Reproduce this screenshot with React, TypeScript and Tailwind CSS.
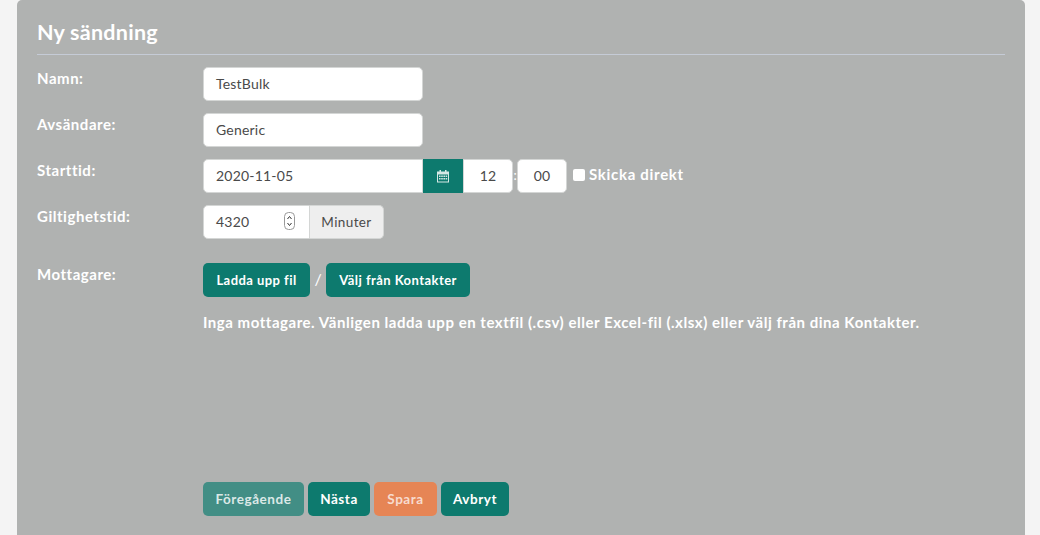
import React from "react";

const inputCls = "h-[34px] pb-[2px] bg-white border border-[#d4d6d5] text-[14px] text-[#4a4a4a] tracking-[0.2px] flex items-center";
const btn = "h-[34px] rounded-[5px] text-[13.5px] font-bold tracking-[0.55px] flex items-center justify-center";
const teal = " bg-[#0d7a6e] text-white";
const label = "text-[15px] font-bold text-white tracking-[0.53px] leading-[20px]";

function Row({ name, children, className = "h-[46px]" }: { name: string; children?: React.ReactNode; className?: string }) {
  return (
    <div className={"flex " + className}>
      <div className={"w-[166px] pt-[1px] " + label}>{name}</div>
      <div className="flex items-start">{children}</div>
    </div>
  );
}

export default function App() {
  return (
    <div className="w-[1040px] h-[535px] overflow-hidden bg-[#f4f4f4] pl-[17px] pr-[15px]" style={{ fontFamily: '"Lato", "Liberation Sans", sans-serif' }}>
      <div className="h-[535px] bg-[#b0b2b1] rounded-t-[5px] px-[20px] pt-[18px]">
        <div className="h-[37px] border-b border-[#c5cbd6] text-[21.5px] font-bold text-white leading-[28px] tracking-[0.25px]">Ny sändning</div>
        <div className="pt-[12px]">
          <Row name="Namn:"><div className={inputCls + " w-[220px] rounded-[5px] px-[12px]"}>TestBulk</div></Row>
          <Row name="Avsändare:"><div className={inputCls + " w-[220px] rounded-[5px] px-[12px]"}>Generic</div></Row>
          <Row name="Starttid:">
            <div className={inputCls + " w-[220px] rounded-l-[5px] px-[12px]"}>2020-11-05</div>
            <div className="w-[40px] h-[34px] bg-[#0d7a6e] flex items-center justify-center">
              <svg width="14" height="14" viewBox="0 0 14 14" fill="#d5e8e5"><path d="M1 2.5h12v11H1z M2 5.5v7h10V5.5z" fillRule="evenodd" /><path d="M3.5 1h1.5v2.5H3.5zM9 1h1.5v2.5H9zM3 6.5h1.6v1.5H3zM5.2 6.5h1.6v1.5H5.2zM7.4 6.5H9v1.5H7.4zM9.6 6.5h1.6v1.5H9.6zM3 9h1.6v1.5H3zM5.2 9h1.6v1.5H5.2zM7.4 9H9v1.5H7.4zM9.6 9h1.6v1.5H9.6z" /></svg>
            </div>
            <div className={inputCls + " w-[50px] rounded-r-[5px] justify-center"}>12</div>
            <div className="w-[4px] h-[34px] text-white text-[13px] flex items-center justify-center">:</div>
            <div className={inputCls + " w-[50px] rounded-[5px] justify-center"}>00</div>
            <div className="ml-[6px] h-[30px] flex items-center">
              <div className="w-[12px] h-[12px] mt-[1px] bg-white rounded-[2px]" />
              <span className="ml-[4px] text-[15px] font-bold text-white tracking-[0.7px] leading-[20px]">Skicka direkt</span>
            </div>
          </Row>
          <Row name="Giltighetstid:" className="h-[58px]">
            <div className={inputCls + " w-[107px] rounded-l-[5px] pl-[12px] justify-between pr-[14px]"}>
              <span>4320</span>
              <svg width="11" height="18" viewBox="0 0 11 18" fill="none"><rect x="0.5" y="0.5" width="10" height="17" rx="4" stroke="#999" /><path d="M3.5 7 5.5 4.5 7.5 7M3.5 11 5.5 13.5 7.5 11" stroke="#333" /></svg>
            </div>
            <div className="h-[34px] w-[74px] bg-[#eeeeee] border border-[#d4d6d5] border-l-0 rounded-r-[5px] text-[13.5px] text-[#4a4a4a] tracking-[0.4px] flex items-center justify-center">Minuter</div>
          </Row>
          <Row name="Mottagare:" className="h-[219px]">
            <div>
              <div className="flex items-center">
                <div className={"h-[34px] rounded-[5px] text-[13px] font-bold tracking-[0.45px] pt-[1px] flex items-center justify-center w-[107px]" + teal}>Ladda upp fil</div>
                <span className="w-[16px] pb-[3px] text-center text-white text-[16px]">/</span>
                <div className={"h-[34px] rounded-[5px] text-[13px] font-bold tracking-[0.45px] pt-[1px] flex items-center justify-center w-[144px]" + teal}>Välj från Kontakter</div>
              </div>
              <div className={"mt-[15px] whitespace-nowrap " + label}>Inga mottagare. Vänligen ladda upp en textfil (.csv) eller Excel-fil (.xlsx) eller välj från dina Kontakter.</div>
            </div>
          </Row>
          <div className="flex pl-[166px] gap-[4px]">
            <div className={btn + " w-[101px] bg-[#428e85] text-[#dce9e7]"}>Föregående</div>
            <div className={btn + teal + " w-[62px]"}>Nästa</div>
            <div className={btn + " w-[63px] bg-[#e68555] text-[#f7dccf]"}>Spara</div>
            <div className={btn + teal + " w-[68px]"}>Avbryt</div>
          </div>
        </div>
      </div>
    </div>
  );
}
